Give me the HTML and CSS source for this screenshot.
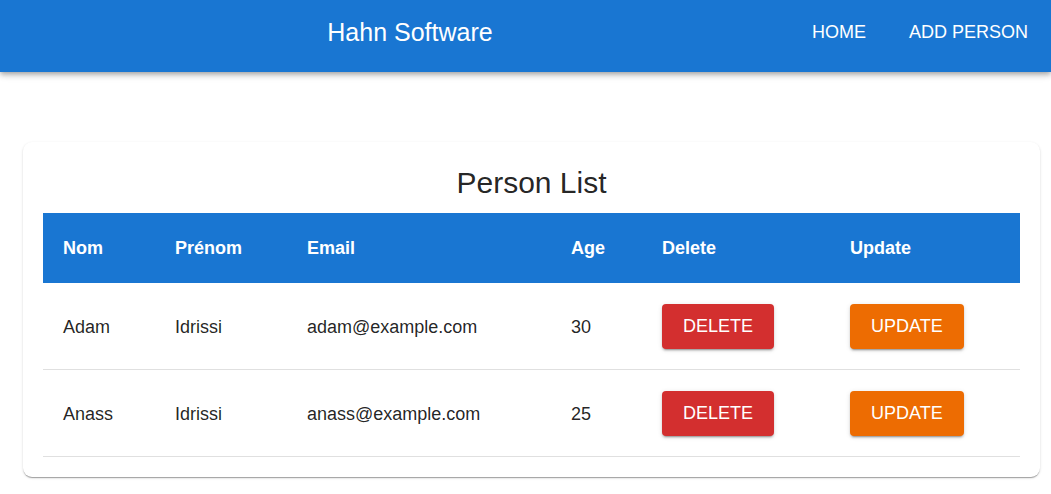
FILE: index.html
```html
<!DOCTYPE html>
<html lang="fr">
<head>
<meta charset="utf-8">
<title>Hahn Software</title>
<link rel="stylesheet" href="styles.css">
</head>
<body>
<header class="appbar">
  <div class="toolbar">
    <div class="brand">Hahn Software</div>
    <nav class="nav">
      <a class="nav-btn" href="#">HOME</a>
      <a class="nav-btn" href="#">ADD PERSON</a>
    </nav>
  </div>
</header>
<main class="main">
  <section class="card">
    <h1 class="card-title">Person List</h1>
    <table class="table">
      <colgroup>
        <col class="c-nom"><col class="c-prenom"><col class="c-email"><col class="c-age"><col class="c-delete"><col class="c-update">
      </colgroup>
      <thead>
        <tr><th>Nom</th><th>Prénom</th><th>Email</th><th>Age</th><th>Delete</th><th>Update</th></tr>
      </thead>
      <tbody>
        <tr>
          <td>Adam</td><td>Idrissi</td><td>adam@example.com</td><td>30</td>
          <td><button class="btn btn-delete">DELETE</button></td>
          <td><button class="btn btn-update">UPDATE</button></td>
        </tr>
        <tr>
          <td>Anass</td><td>Idrissi</td><td>anass@example.com</td><td>25</td>
          <td><button class="btn btn-delete">DELETE</button></td>
          <td><button class="btn btn-update">UPDATE</button></td>
        </tr>
      </tbody>
    </table>
  </section>
</main>
</body>
</html>
```
FILE: styles.css
```css
* { box-sizing: border-box; }
html, body {
  margin: 0;
  padding: 0;
  background: #fff;
  font-family: "Liberation Sans", Arial, sans-serif;
  color: rgba(0,0,0,0.87);
}
.appbar {
  background: #1976d2;
  color: #fff;
  height: 72px;
  box-shadow: 0px 2px 4px -1px rgba(0,0,0,0.2), 0px 4px 5px 0px rgba(0,0,0,0.14), 0px 1px 10px 0px rgba(0,0,0,0.12);
  position: relative;
  z-index: 1;
}
.toolbar {
  height: 64px;
  display: flex;
  align-items: center;
  padding: 0 7px 0 24px;
}
.brand {
  flex: 1;
  text-align: center;
  font-size: 25px;
  line-height: 1.2;
}
.nav {
  display: flex;
  gap: 11px;
}
.nav-btn {
  color: #fff;
  text-decoration: none;
  font-size: 18px;
  line-height: 1.6;
  padding: 6px 16px;
}
.main {
  padding: 70px 11px 20px 23px;
}
.card {
  background: #fff;
  border-radius: 9px;
  box-shadow: 0px 2px 1px -1px rgba(0,0,0,0.2), 0px 1px 1px 0px rgba(0,0,0,0.14), 0px 1px 3px 0px rgba(0,0,0,0.12);
  padding: 20px;
}
.card-title {
  margin: 3px 0 12px;
  text-align: center;
  font-weight: 400;
  font-size: 30px;
  line-height: 36px;
  color: rgba(0,0,0,0.87);
}
.table {
  width: 100%;
  border-collapse: collapse;
  table-layout: fixed;
  font-size: 18px;
}
.c-nom { width: 112px; }
.c-prenom { width: 132px; }
.c-email { width: 264px; }
.c-age { width: 91px; }
.c-delete { width: 188px; }
.c-update { width: 190px; }
.table thead tr {
  background: #1976d2;
}
.table th {
  color: #fff;
  font-weight: 700;
  text-align: left;
  padding: 24px 20px;
  line-height: 22px;
}
.table td {
  padding: 21px 20px 20px;
  line-height: 22px;
  border-bottom: 1px solid #e0e0e0;
  vertical-align: middle;
}
.btn {
  font-family: "Liberation Sans", Arial, sans-serif;
  font-size: 18px;
  line-height: 27px;
  padding: 9px 21px;
  border: none;
  border-radius: 4px;
  color: #fff;
  cursor: pointer;
  display: inline-block;
  vertical-align: middle;
  box-shadow: 0px 3px 1px -2px rgba(0,0,0,0.2), 0px 2px 2px 0px rgba(0,0,0,0.14), 0px 1px 5px 0px rgba(0,0,0,0.12);
}
.btn-delete { background: #d32f2f; }
.btn-update { background: #ed6c02; }
```
